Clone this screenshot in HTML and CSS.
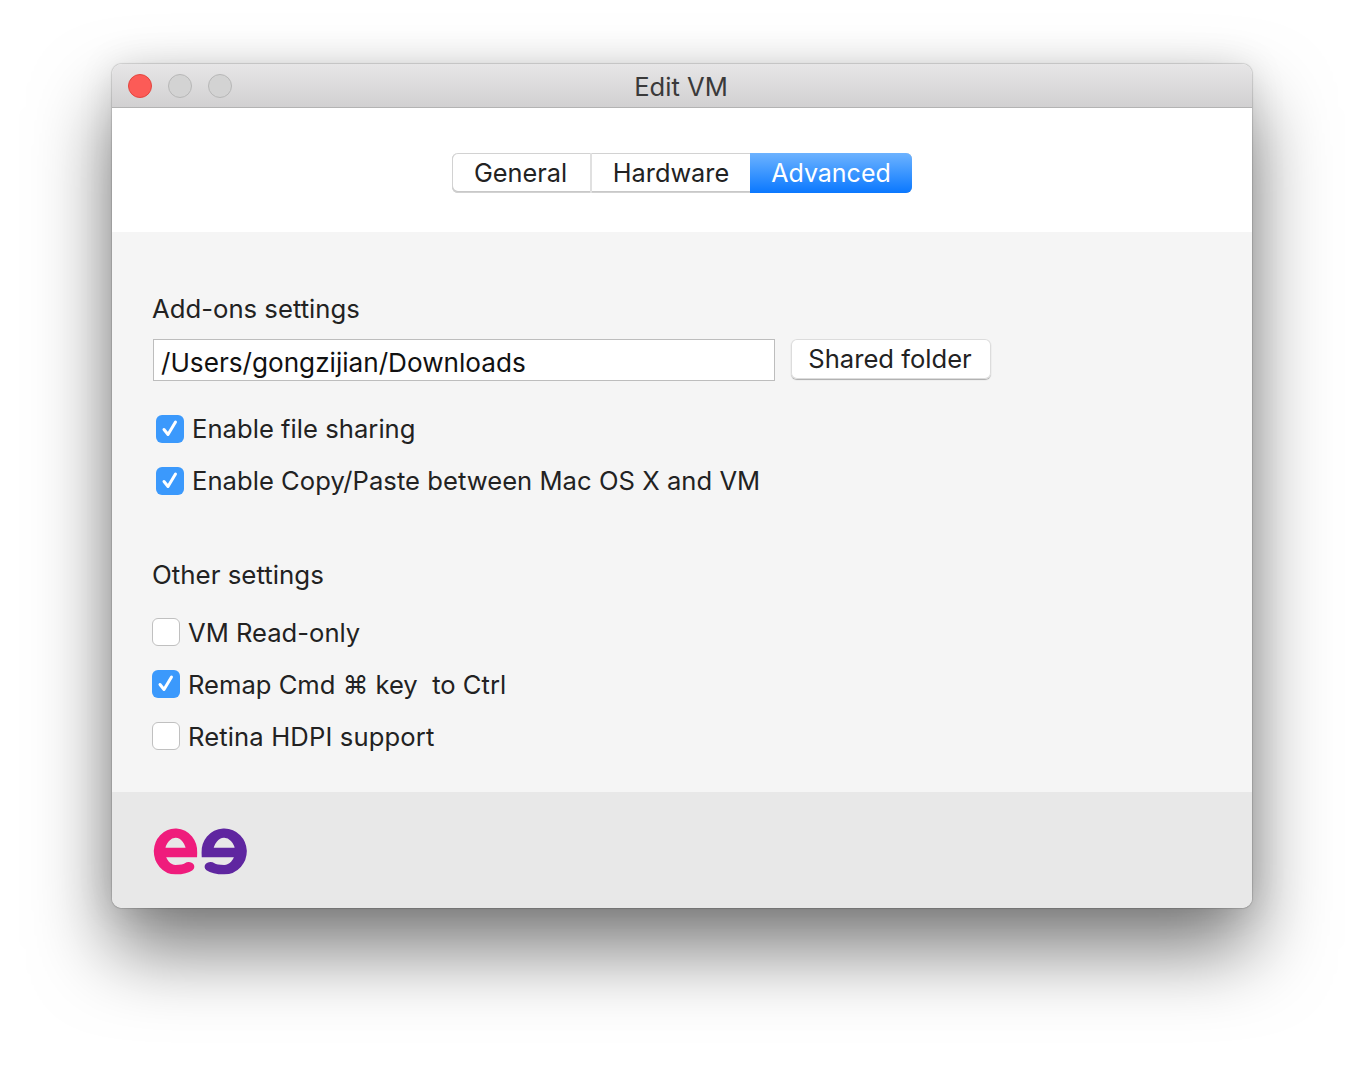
FILE: index.html
```html
<!DOCTYPE html>
<html lang="en">
<head>
<meta charset="utf-8">
<title>Edit VM</title>
<link rel="stylesheet" href="styles.css">
</head>
<body>
<main class="window">
  <header class="titlebar">
    <div class="lights"><span class="light close"></span><span class="light"></span><span class="light"></span></div>
    <div class="title">Edit VM</div>
  </header>
  <section class="tabs-area">
    <nav class="segments">
      <div class="seg seg-general">General</div>
      <div class="seg seg-hardware">Hardware</div>
      <div class="seg seg-advanced">Advanced</div>
    </nav>
  </section>
  <section class="panel">
    <h2 class="heading">Add-ons settings</h2>
    <div class="folder-row">
      <div class="path-input">/Users/gongzijian/Downloads</div>
      <div class="folder-btn">Shared folder</div>
    </div>
    <div class="group group-addons">
      <label class="check-row"><span class="box on"><svg viewBox="0 0 28 28"><path d="M8 14.500 L12 19.500 L19.500 7"/></svg></span><span class="label">Enable file sharing</span></label>
      <label class="check-row"><span class="box on"><svg viewBox="0 0 28 28"><path d="M8 14.500 L12 19.500 L19.500 7"/></svg></span><span class="label">Enable Copy/Paste between Mac OS X and VM</span></label>
    </div>
    <h2 class="heading heading-other">Other settings</h2>
    <div class="group group-other">
      <label class="check-row"><span class="box"></span><span class="label">VM Read-only</span></label>
      <label class="check-row"><span class="box on"><svg viewBox="0 0 28 28"><path d="M8 14.500 L12 19.500 L19.500 7"/></svg></span><span class="label">Remap Cmd ⌘ key&nbsp; to Ctrl</span></label>
      <label class="check-row"><span class="box"></span><span class="label label-wide">Retina HDPI support</span></label>
    </div>
  </section>
  <footer class="footer">
    <svg class="logo" viewBox="0 0 96 50" aria-label="logo">
      <path class="logo-e" transform="translate(23.5 25) scale(1.2 1)" d="M-10 1.500 H13.400 A13.400 18.600 0 0 0 -13.400 0 A13.400 18.600 0 0 0 0 18.600 C4 18.600 8.500 18 11 15.700"/>
      <path class="logo-a" transform="translate(72.2 25) scale(-1.25 1)" d="M-10 1.500 H13.400 A13.400 18.600 0 0 0 -13.400 0 A13.400 18.600 0 0 0 0 18.600 C4 18.600 8.500 18 11 15.700"/>
    </svg>
  </footer>
</main>
</body>
</html>
```
FILE: styles.css
```css
* { box-sizing: border-box; }
html, body { margin: 0; background: #fff; }
body {
  width: 1364px;
  height: 1068px;
  padding: 64px 112px 0;
  overflow: hidden;
  font-family: Inter, "DejaVu Sans", sans-serif;
  font-size: 25.6px;
  color: #222;
}
.window {
  width: 1140px;
  height: 844px;
  border-radius: 10px;
  overflow: hidden;
  display: flex;
  flex-direction: column;
  box-shadow: 0 42px 78px rgba(0,0,0,.52), 0 0 1px 1px rgba(0,0,0,.14), 0 0 36px rgba(0,0,0,.1);
}
.titlebar {
  height: 44px;
  flex: none;
  display: grid;
  grid-template-columns: 1fr auto 1fr;
  align-items: center;
  background: linear-gradient(#e7e6e7, #d1d0d1);
  border-bottom: 1px solid #b3b3b3;
}
.lights { display: flex; gap: 16px; padding-left: 16px; }
.light {
  width: 24px;
  height: 24px;
  border-radius: 50%;
  background: #d3d3d3;
  border: 1px solid #b7b7b7;
}
.light.close { background: #fc5b57; border-color: #e2463f; }
.title { color: #3a3a3a; padding: 2px 2px 0 0; }
.tabs-area {
  height: 124px;
  flex: none;
  background: #fff;
  padding-top: 45px;
  display: flex;
  justify-content: center;
}
.segments {
  width: 460px;
  height: 40px;
  display: flex;
  border-radius: 6px;
  overflow: hidden;
  box-shadow: inset 0 0 0 1px #d2d2d2, inset 0 -1px 0 1px #c8c8c8;
}
.seg { display: flex; align-items: center; justify-content: center; font-size: 25.3px; padding-bottom: 1px; }
.seg-general { width: 140px; border-right: 2px solid #e0e0e0; padding-right: 1px; }
.seg-hardware { width: 158px; }
.seg-advanced {
  width: 162px;
  color: #fff;
  font-size: 25px;
  padding-bottom: 0;
  background: linear-gradient(#6db3ff, #0a78ff);
}
.panel {
  height: 560px;
  flex: none;
  background: #f5f5f5;
  padding: 62px 41px 0;
}
.heading {
  margin: 0 0 0 -1px;
  font-weight: 400;
  font-size: 25.7px;
  line-height: 30px;
}
.heading-other { margin-top: 65px; font-size: 25.9px; }
.folder-row { display: flex; gap: 16px; margin-top: 15px; align-items: flex-start; }
.path-input {
  width: 622px;
  height: 42px;
  background: #fff;
  border: 1px solid #bdbdbd;
  padding: 4px 0 0 7px;
  display: flex;
  align-items: center;
  color: #111;
  font-size: 26.150px;
}
.folder-btn {
  width: 200px;
  height: 40px;
  background: #fff;
  border-radius: 6px;
  box-shadow: 0 0 0 1px #dcdcdc inset, 0 1px 1px rgba(0,0,0,.3);
  display: flex;
  align-items: center;
  justify-content: center;
  padding: 0 2px 2px 0;
}
.group { display: flex; flex-direction: column; gap: 24px; }
.group-addons { margin: 34px 0 0 3px; }
.group-addons .label { padding-bottom: 2px; letter-spacing: .03px; }
.group-other { margin: 28px 0 0 -1px; }
.label-wide { letter-spacing: .13px; }
.check-row { display: flex; align-items: center; gap: 8px; height: 28px; }
.box {
  width: 28px;
  height: 28px;
  flex: none;
  border-radius: 6px;
  background: #fff;
  border: 1px solid #c0c0c0;
}
.box.on { background: #3b99fc; border: 0; }
.box svg { display: block; width: 28px; height: 28px; }
.box path { fill: none; stroke: #fff; stroke-width: 3; stroke-linecap: round; stroke-linejoin: round; }
.footer {
  flex: 1;
  background: #e8e8e8;
  padding: 34px 0 0 40px;
}
.logo { display: block; width: 96px; height: 50px; }
.logo path { fill: none; stroke-width: 9.400; stroke-linecap: round; stroke-linejoin: miter; }
.logo-e { stroke: #ef1c7c; }
.logo-a { stroke: #5f26a0; }
```
